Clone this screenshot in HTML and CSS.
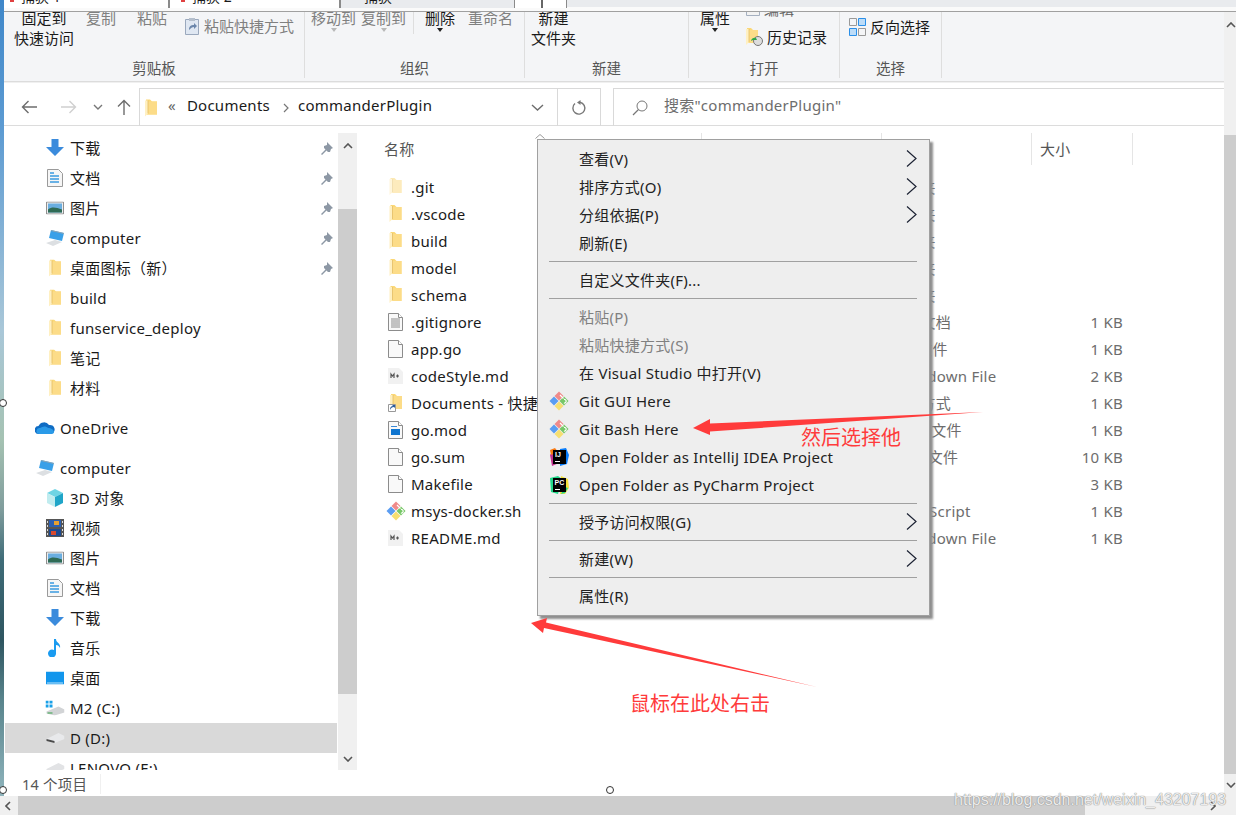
FILE: index.html
```html
<!DOCTYPE html>
<html>
<head>
    <meta charset="UTF-8">
    <title>commanderPlugin</title>
    <link rel="stylesheet" href="styles.css">
</head>
<body>
<svg class="defs" width="0" height="0">
    <symbol id="i-folder" viewBox="0 0 12 17">
        <path d="M1 0h4l2 2h5v13H1z" fill="#fbd877"/>
        <path d="M2 2h10v13H2z" fill="#fcdc88"/>
        <path d="M0 1h3v13L0 17z" fill="#fff0c2"/>
        <path d="M3 1v13" stroke="#e3bd62" stroke-width=".8"/>
    </symbol>
    <symbol id="i-down" viewBox="0 0 18 18">
        <path d="M5.500 0h7v8H18l-9 9-9-9h5.500z" fill="#3b8bdc"/>
    </symbol>
    <symbol id="i-doc" viewBox="0 0 16 18">
        <path d="M.5.500h11l4 4v13H.5z" fill="#f6f6f6" stroke="#9a9a9a"/>
        <path d="M3 4h4M3 7h9M3 10h9M3 13h9" stroke="#3a9ae0" stroke-width="1.500"/>
    </symbol>
    <symbol id="i-pic" viewBox="0 0 18 13">
        <path d="M.5.500h17v12H.5z" fill="#eee" stroke="#8f8f8f"/>
        <path d="M2 2h14v9H2z" fill="#6aaee0"/>
        <path d="M2 8c4-3 8-2 14 0v3H2z" fill="#2f6b55"/>
    </symbol>
    <symbol id="i-pc" viewBox="0 0 20 18">
        <path d="M6 1l13 3-2 8-13-3z" fill="#3aa0e8"/>
        <path d="M6 1l13 3v1L6 2z" fill="#8fa5b5"/>
        <path d="M1 14l9-3 7 2-9 4z" fill="#dcdfe2"/>
    </symbol>
    <symbol id="i-git" viewBox="0 0 20 20">
        <path d="M10 .5L14.500 5 10 9.500 5.500 5z" fill="#f08a8a"/>
        <path d="M5 5.500L9.500 10 5 14.500.5 10z" fill="#5a9df2"/>
        <path d="M15 5.500l4.500 4.500-4.500 4.500-4.500-4.500z" fill="#76c766"/>
        <path d="M10 10.500l4.500 4.500-4.500 4.500L5.500 15z" fill="#f6df72"/>
        <path d="M11 4l3.500 3.500M15 8.500a1.800 1.800 0 1 1-.1 3.500" fill="none" stroke="#fff" stroke-width="1.200"/>
    </symbol>
    <symbol id="i-file" viewBox="0 0 15 18">
        <path d="M.5.500h10l4 4v13H.5z" fill="#f9f9f9" stroke="#8c8c8c"/>
        <path d="M10.500.5v4h4" fill="#fff" stroke="#8c8c8c"/>
    </symbol>
    <symbol id="i-md" viewBox="0 0 15 18">
        <path d="M0 1h11l4 4v12H0z" fill="#f1f1f1"/>
        <path d="M3 11V7l1.500 2L6 7v4M8 9h3M9.500 7.500v3" fill="none" stroke="#555" stroke-width="1.200"/>
    </symbol>
    <symbol id="i-pin" viewBox="0 0 13 13">
        <path d="M7 0l6 6-2 1-1 3-2 0-1.500-1.500L2 13l-1-1 4.500-4.500L4 6V4l3-1z" fill="#8d98a5"/>
    </symbol>
    <symbol id="i-chev" viewBox="0 0 11 17">
        <path d="M1 .5l9 8-9 8" fill="none" stroke="#1c2233" stroke-width="1.200"/>
    </symbol>
</svg>

<div class="desk"></div>
<div class="win">
    <div class="tabs">
        <div class="tab t1"><span class="tab-txt">捕获 1</span><i>×</i></div>
        <div class="tab t2"><span class="tab-txt">捕获 2</span><i>×</i></div>
        <div class="tab on"><span class="tab-txt">捕获</span><i>×</i></div>
        <div class="tab small"><b></b></div>
    </div>

    <div class="mid">
        <div class="content">
            <div class="ribbon">
                <div class="grp g1">
                    <div class="grp-body">
                        <div class="tool w60"><span>固定到</span><span>快速访问</span></div>
                        <div class="tool off ml12"><span>复制</span></div>
                        <div class="tool off ml21"><span>粘贴</span></div>
                        <div class="tool-row off ml18">
                            <svg width="14" height="18" viewBox="0 0 14 18"><path d="M.5 2.500h13v15H.5z" fill="#dfe7f2" stroke="#9aa8bd"/><path d="M4 1h6v3H4z" fill="#b5bfcc"/><path d="M4 13c0-4 2-5 5-5V6l3 3-3 3v-2c-2 0-3 1-5 3z" fill="#6b86ab"/></svg>
                            <span>粘贴快捷方式</span>
                        </div>
                    </div>
                    <div class="grp-label">剪贴板</div>
                </div>
                <div class="grp g2">
                    <div class="grp-body">
                        <div class="tool off drop"><span>移动到</span></div>
                        <div class="tool off drop ml5"><span>复制到</span></div>
                        <div class="rule"></div>
                        <div class="tool drop dark"><span>删除</span></div>
                        <div class="tool off ml13"><span>重命名</span></div>
                    </div>
                    <div class="grp-label">组织</div>
                </div>
                <div class="grp g3">
                    <div class="grp-body">
                        <div class="tool"><span>新建</span><span>文件夹</span></div>
                    </div>
                    <div class="grp-label">新建</div>
                </div>
                <div class="grp g4">
                    <div class="grp-body">
                        <div class="tool drop dark"><span>属性</span></div>
                        <div class="open-col">
                            <div class="tool-row clip"><svg width="14" height="14" viewBox="0 0 14 14"><path d="M.5.500h13v13H.5z" fill="#f2f2f2" stroke="#a5b0c0"/></svg><span>编辑</span></div>
                            <div class="tool-row">
                                <svg width="17" height="18" viewBox="0 0 17 18"><use href="#i-folder" width="12" height="17"/><circle cx="12" cy="13" r="4.500" fill="#ddd" stroke="#777"/><path d="M5 13a3.500 3.500 0 0 1 5-3l1 2H7z" fill="#2fa84a"/></svg>
                                <span>历史记录</span>
                            </div>
                        </div>
                    </div>
                    <div class="grp-label">打开</div>
                </div>
                <div class="grp g5">
                    <div class="grp-body">
                        <div class="tool-row sel-tool">
                            <svg width="17" height="18" viewBox="0 0 17 18"><path d="M.5.500h7v7h-7zM9.500 10.500h7v7h-7z" fill="#f4f5f7" stroke="#999"/><path d="M9.500.5h7v7h-7zM.5 10.500h7v7h-7z" fill="#bcdcf8" stroke="#2a8fe8"/></svg>
                            <span>反向选择</span>
                        </div>
                    </div>
                    <div class="grp-label">选择</div>
                </div>
            </div>

            <div class="addr">
                <div class="nav-btns">
                    <svg width="16" height="14" viewBox="0 0 16 14"><path d="M16 7H1.500M7.500 1l-6 6 6 6" fill="none" stroke="#6d6d6d" stroke-width="1.400"/></svg>
                    <svg class="ml24" width="16" height="14" viewBox="0 0 16 14"><path d="M0 7h14.500M8.500 1l6 6-6 6" fill="none" stroke="#d0d0d0" stroke-width="1.400"/></svg>
                    <svg class="ml16" width="10" height="6" viewBox="0 0 10 6"><path d="M1 1l4 4 4-4" fill="none" stroke="#777" stroke-width="1.400"/></svg>
                    <svg class="ml14" width="14" height="16" viewBox="0 0 14 16"><path d="M7 16V1.500M1 7.500l6-6 6 6" fill="none" stroke="#6d6d6d" stroke-width="1.400"/></svg>
                </div>
                <div class="path">
                    <svg class="path-ico" width="12" height="18"><use href="#i-folder"/></svg>
                    <span class="crumb-sep">«</span>
                    <span class="crumb">Documents</span>
                    <svg class="crumb-arrow" width="6" height="10" viewBox="0 0 6 10"><path d="M1 1l4 4-4 4" fill="none" stroke="#777" stroke-width="1.200"/></svg>
                    <span class="crumb">commanderPlugin</span>
                    <svg class="path-drop" width="13" height="7" viewBox="0 0 13 7"><path d="M1 1l5.500 5L12 1" fill="none" stroke="#6d6d6d" stroke-width="1.400"/></svg>
                    <div class="path-refresh">
                        <svg width="16" height="16" viewBox="0 0 16 16"><path d="M9 2.200A6 6 0 1 1 4 3.500" fill="none" stroke="#777" stroke-width="1.400"/><path d="M9.500 0v5L6 2.500z" fill="#777"/></svg>
                    </div>
                </div>
                <div class="search">
                    <svg width="16" height="16" viewBox="0 0 16 16"><circle cx="10" cy="6" r="5" fill="none" stroke="#777"/><path d="M6.500 9.500L1 15" stroke="#777" stroke-width="1.200"/></svg>
                    <span>搜索"commanderPlugin"</span>
                </div>
            </div>

            <div class="main">
                <div class="side">
                    <div class="side-list">
                        <div class="n"><svg class="ni" width="18" height="18"><use href="#i-down"/></svg><span>下载</span><svg class="pin" width="13" height="13"><use href="#i-pin"/></svg></div>
                        <div class="n"><svg class="ni" width="16" height="18"><use href="#i-doc"/></svg><span>文档</span><svg class="pin" width="13" height="13"><use href="#i-pin"/></svg></div>
                        <div class="n"><svg class="ni" width="18" height="13"><use href="#i-pic"/></svg><span>图片</span><svg class="pin" width="13" height="13"><use href="#i-pin"/></svg></div>
                        <div class="n"><svg class="ni" width="20" height="18"><use href="#i-pc"/></svg><span>computer</span><svg class="pin" width="13" height="13"><use href="#i-pin"/></svg></div>
                        <div class="n"><svg class="ni" width="12" height="17"><use href="#i-folder"/></svg><span>桌面图标（新）</span><svg class="pin" width="13" height="13"><use href="#i-pin"/></svg></div>
                        <div class="n"><svg class="ni" width="12" height="17"><use href="#i-folder"/></svg><span>build</span></div>
                        <div class="n"><svg class="ni" width="12" height="17"><use href="#i-folder"/></svg><span>funservice_deploy</span></div>
                        <div class="n"><svg class="ni" width="12" height="17"><use href="#i-folder"/></svg><span>笔记</span></div>
                        <div class="n"><svg class="ni" width="12" height="17"><use href="#i-folder"/></svg><span>材料</span></div>

                        <div class="n top lv0"><svg class="ni" width="20" height="14" viewBox="0 0 20 14"><path d="M4 13a4 4 0 0 1-.5-8A6 6 0 0 1 14 4a4.500 4.500 0 0 1 2 9z" fill="#0f6cc4"/><path d="M4 13a3 3 0 0 1 1-6c3-2 6-2 8 0 3 0 6 2 6 4 0 1-1 2-3 2z" fill="#2a9ae8"/></svg><span>OneDrive</span></div>

                        <div class="n top lv0"><svg class="ni" width="20" height="18"><use href="#i-pc"/></svg><span>computer</span></div>
                        <div class="n"><svg class="ni" width="18" height="18" viewBox="0 0 18 18"><path d="M9 0l8 4-8 4-8-4z" fill="#6ed4e4"/><path d="M1 4l8 4v10l-8-4z" fill="#c0ecef"/><path d="M17 4L9 8v10l8-4z" fill="#1fa5c8"/></svg><span>3D 对象</span></div>
                        <div class="n"><svg class="ni" width="18" height="18" viewBox="0 0 18 18"><path d="M0 0h18v18H0z" fill="#555"/><path d="M3 1h12v7H3z" fill="#2b5fb0"/><path d="M3 10h12v7H3z" fill="#1d4a90"/><path d="M8 2h5v4H8z" fill="#e8a030"/><path d="M5 12h5v4H5z" fill="#d84a30"/><path d="M1 2h1v2H1zM1 6h1v2H1zM1 10h1v2H1zM1 14h1v2H1zM16 2h1v2h-1zM16 6h1v2h-1zM16 10h1v2h-1zM16 14h1v2h-1z" fill="#ddd"/></svg><span>视频</span></div>
                        <div class="n"><svg class="ni" width="18" height="13"><use href="#i-pic"/></svg><span>图片</span></div>
                        <div class="n"><svg class="ni" width="16" height="18"><use href="#i-doc"/></svg><span>文档</span></div>
                        <div class="n"><svg class="ni" width="18" height="18"><use href="#i-down"/></svg><span>下载</span></div>
                        <div class="n"><svg class="ni" width="14" height="18" viewBox="0 0 14 18"><path d="M6 0h2c0 4 5 4 4 9-1-2-2-3-4-3v8a4 4 0 1 1-2-3z" fill="#1a9bf0"/></svg><span>音乐</span></div>
                        <div class="n"><svg class="ni" width="18" height="13" viewBox="0 0 18 13"><path d="M0 0h18v13H0z" fill="#1296ec"/><path d="M1 11h16v1H1z" fill="#bfe6fb"/></svg><span>桌面</span></div>
                        <div class="n"><svg class="ni" width="19" height="15" viewBox="0 0 19 15"><path d="M0 0h3v3H0zM4 0h3v3H4zM0 4h3v3H0zM4 4h3v3H4z" fill="#18a0e8"/><path d="M1 11l12-5 6 3v3l-10 3-8-2z" fill="#d2d4d6"/><path d="M2 12h5v1H2z" fill="#37a24a"/></svg><span>M2 (C:)</span></div>
                        <div class="n cur"><svg class="ni" width="19" height="10" viewBox="0 0 19 10"><path d="M1 6l12-6 6 3v3L9 10 1 8z" fill="#e8e9eb"/><path d="M1 6l8 2v2L1 8z" fill="#4a4a4a"/></svg><span>D (D:)</span></div>
                        <div class="n"><svg class="ni" width="19" height="10" viewBox="0 0 19 10"><path d="M1 6l12-6 6 3v3L9 10 1 8z" fill="#e2e3e5"/></svg><span>LENOVO (E:)</span></div>
                    </div>
                    <div class="side-scroll">
                        <div class="sc-end"><svg width="10" height="6" viewBox="0 0 10 6"><path d="M1 5l4-4 4 4" fill="none" stroke="#555" stroke-width="1.600"/></svg></div>
                        <div class="sc-thumb"></div>
                        <div class="sc-end end-b"><svg width="10" height="6" viewBox="0 0 10 6"><path d="M1 1l4 4 4-4" fill="none" stroke="#555" stroke-width="1.600"/></svg></div>
                    </div>
                </div>

                <div class="files">
                    <div class="heads">
                        <div class="h h-name">名称<svg class="sort-up" width="10" height="5" viewBox="0 0 10 5"><path d="M.5 4.500L5 .5l4.500 4" fill="none" stroke="#999"/></svg></div>
                        <div class="h h-date"></div>
                        <div class="h h-type"></div>
                        <div class="h h-size">大小</div>
                    </div>
                    <div class="row"><svg class="fi" width="15" height="17" opacity=".55"><use href="#i-folder"/></svg><span class="c-name">.git</span><span class="c-type">文件夹</span><span class="c-size"></span></div>
                    <div class="row"><svg class="fi" width="15" height="17"><use href="#i-folder"/></svg><span class="c-name">.vscode</span><span class="c-type">文件夹</span><span class="c-size"></span></div>
                    <div class="row"><svg class="fi" width="15" height="17"><use href="#i-folder"/></svg><span class="c-name">build</span><span class="c-type">文件夹</span><span class="c-size"></span></div>
                    <div class="row"><svg class="fi" width="15" height="17"><use href="#i-folder"/></svg><span class="c-name">model</span><span class="c-type">文件夹</span><span class="c-size"></span></div>
                    <div class="row"><svg class="fi" width="15" height="17"><use href="#i-folder"/></svg><span class="c-name">schema</span><span class="c-type">文件夹</span><span class="c-size"></span></div>
                    <div class="row"><svg class="fi" width="15" height="18" viewBox="0 0 15 18"><use href="#i-file"/><path d="M3 6h9M3 8h9M3 10h9M3 12h9M3 14h9" stroke="#8c8c8c"/></svg><span class="c-name">.gitignore</span><span class="c-type">文本文档</span><span class="c-size">1 KB</span></div>
                    <div class="row"><svg class="fi" width="15" height="18"><use href="#i-file"/></svg><span class="c-name">app.go</span><span class="c-type">GO 文件</span><span class="c-size">1 KB</span></div>
                    <div class="row"><svg class="fi" width="15" height="18"><use href="#i-md"/></svg><span class="c-name">codeStyle.md</span><span class="c-type">Markdown File</span><span class="c-size">2 KB</span></div>
                    <div class="row"><svg class="fi" width="15" height="18" viewBox="0 0 15 18"><use href="#i-folder" x="2" width="12" height="17"/><path d="M.5 10.500h7v7h-7z" fill="#fff" stroke="#999"/><path d="M2 16c0-3 1-4 3-4l-1-1h3v3l-1-1c-2 0-3 1-4 3z" fill="#2a5d9c"/></svg><span class="c-name">Documents - 快捷方式</span><span class="c-type">快捷方式</span><span class="c-size">1 KB</span></div>
                    <div class="row"><svg class="fi" width="15" height="18" viewBox="0 0 15 18"><use href="#i-file"/><path d="M3 8h9v6H3z" fill="#0f75d0"/><path d="M3 5h6v1H3z" fill="#3a8ad8"/></svg><span class="c-name">go.mod</span><span class="c-type">MOD 文件</span><span class="c-size">1 KB</span></div>
                    <div class="row"><svg class="fi" width="15" height="18"><use href="#i-file"/></svg><span class="c-name">go.sum</span><span class="c-type">SUM 文件</span><span class="c-size">10 KB</span></div>
                    <div class="row"><svg class="fi" width="15" height="18"><use href="#i-file"/></svg><span class="c-name">Makefile</span><span class="c-type">文件</span><span class="c-size">3 KB</span></div>
                    <div class="row git-row"><svg class="fi" width="20" height="20"><use href="#i-git"/></svg><span class="c-name">msys-docker.sh</span><span class="c-type">Shell Script</span><span class="c-size">1 KB</span></div>
                    <div class="row"><svg class="fi" width="15" height="18"><use href="#i-md"/></svg><span class="c-name">README.md</span><span class="c-type">Markdown File</span><span class="c-size">1 KB</span></div>
                </div>
            </div>

            <div class="status"><span>14 个项目</span></div>
        </div>

        <div class="vbar">
            <div class="vb-top"><svg width="10" height="6" viewBox="0 0 10 6"><path d="M1 5l4-4 4 4" fill="none" stroke="#555" stroke-width="1.600"/></svg></div>
            <div class="sc-thumb"></div>
            <div class="vb-bot"><svg width="10" height="6" viewBox="0 0 10 6"><path d="M1 1l4 4 4-4" fill="none" stroke="#555" stroke-width="1.600"/></svg></div>
        </div>
    </div>

    <div class="hbar">
        <div class="hb-left"><svg width="6" height="10" viewBox="0 0 6 10"><path d="M5 1L1 5l4 4" fill="none" stroke="#555" stroke-width="1.600"/></svg></div>
        <div class="hb-thumb"></div>
        <div class="hb-right"><svg width="6" height="10" viewBox="0 0 6 10"><path d="M1 1l4 4-4 4" fill="none" stroke="#555" stroke-width="1.600"/></svg></div>
    </div>
</div>

<!-- 右键菜单 -->
<div class="menu">
    <div class="mi has">查看(V)<svg class="arr" width="11" height="17"><use href="#i-chev"/></svg></div>
    <div class="mi has">排序方式(O)<svg class="arr" width="11" height="17"><use href="#i-chev"/></svg></div>
    <div class="mi has">分组依据(P)<svg class="arr" width="11" height="17"><use href="#i-chev"/></svg></div>
    <div class="mi">刷新(E)</div>
    <div class="ms"></div>
    <div class="mi">自定义文件夹(F)...</div>
    <div class="ms"></div>
    <div class="mi dis">粘贴(P)</div>
    <div class="mi dis">粘贴快捷方式(S)</div>
    <div class="mi">在 Visual Studio 中打开(V)</div>
    <div class="mi"><svg class="mico" width="20" height="20"><use href="#i-git"/></svg>Git GUI Here</div>
    <div class="mi"><svg class="mico" width="20" height="20"><use href="#i-git"/></svg>Git Bash Here</div>
    <div class="mi"><svg class="mico" width="20" height="20" viewBox="0 0 20 20"><path d="M1 8l4-6 5 2v12l-7 3z" fill="#c2338f"/><path d="M1 3l5-2 3 4-7 3z" fill="#f97a12"/><path d="M11 2l6-1 3 7-2 9-7 2z" fill="#087cfa"/><path d="M4 3h13v14H4z" fill="#000"/><text class="ico-txt" x="6" y="10">IJ</text><path d="M6 14h5v1H6z" fill="#fff"/></svg><span>Open Folder as IntelliJ IDEA Project</span></div>
    <div class="mi"><svg class="mico" width="20" height="20" viewBox="0 0 20 20"><path d="M1 3l8-2 4 3-4 15-7-2z" fill="#21d789"/><path d="M12 1l7 3 1 9-4 6h-5z" fill="#f5e13a"/><path d="M16 12l3 1-3 5-4 1z" fill="#21d789"/><path d="M4 3h13v14H4z" fill="#000"/><text class="ico-txt" x="5.500" y="10">PC</text><path d="M6 14h5v1H6z" fill="#fff"/></svg><span>Open Folder as PyCharm Project</span></div>
    <div class="ms"></div>
    <div class="mi has">授予访问权限(G)<svg class="arr" width="11" height="17"><use href="#i-chev"/></svg></div>
    <div class="ms"></div>
    <div class="mi has">新建(W)<svg class="arr" width="11" height="17"><use href="#i-chev"/></svg></div>
    <div class="ms"></div>
    <div class="mi">属性(R)</div>
</div>

<!-- 截图上的标注 -->
<svg class="marks" width="1236" height="819" viewBox="0 0 1236 819">
    <path d="M693 428L710 419L710 423.500L983 412L710 431.500L710 435z" fill="#ff3b3b"/>
    <path d="M531 623L547 618L546 622.500L817 687L544 628L543 633z" fill="#ff3b3b"/>
</svg>
<div class="note note-a">然后选择他</div>
<div class="note note-b">鼠标在此处右击</div>
<span class="handle h1"></span>
<span class="handle h2"></span>
<span class="handle h3"></span>
<div class="mark">https://blog.csdn.net/weixin_43207193</div>
</body>
</html>
```
FILE: styles.css
```css
* {
    margin: 0;
    padding: 0;
    box-sizing: border-box;
}

html, body {
    width: 1236px;
    height: 819px;
    overflow: hidden;
    background: #fff;
    font-family: "Noto Sans", "Noto Sans CJK SC", sans-serif;
    font-size: 15px;
    line-height: 20px;
    letter-spacing: .25px;
    color: #1a1a1a;
}

body {
    display: flex;
    position: relative;
}

svg {
    display: block;
    flex: none;
}

.defs {
    position: absolute;
}

.desk {
    width: 4px;
    height: 796px;
    flex: none;
    background: linear-gradient(#3f87c9 0, #5d9bd2 130px, #a9c7d8 330px, #a5c2b2 440px, #7f9c9c 510px, #3f6c78 560px, #2e5560 640px, #59848c 700px, #8fb4bc 796px);
}

.win {
    width: 1232px;
    height: 819px;
    flex: none;
}

/* 标签栏 */
.tabs {
    height: 12px;
    display: flex;
    overflow: hidden;
    background: #e9ebee;
    border-bottom: 1px solid #a0a0a0;
    box-shadow: inset 0 -4px 0 #fafafa;
}

.tab {
    height: 8px;
    display: flex;
    background: #fff;
    border-right: 2px solid #8a8a8a;
    font-size: 14px;
    line-height: 14px;
    letter-spacing: 0;
    overflow: hidden;
    flex: none;
}

.t1 { width: 166px; padding: 0 10px 0 17px; }
.t2 { width: 171px; padding: 0 11px 0 22px; }

.t1::before, .t2::before {
    content: "";
    width: 4px;
    height: 2px;
    margin: 0 7px 0 -11px;
    background: #e04040;
}

.tab.on {
    width: 174px;
    background: #e9ebee;
    border-right: 1px solid #8a8a8a;
    padding: 0 4px 0 23px;
}

.tab.small {
    width: 52px;
    border-right: 1px solid #8a8a8a;
}

.tab.small b {
    width: 2px;
    height: 8px;
    margin-left: 26px;
    background: #666;
}

.tab-txt, .tab i {
    margin-top: -10px;
    font-style: normal;
}

.tab-txt {
    margin-right: auto;
}

.mid {
    height: 784px;
    display: flex;
}

.content {
    width: 1220px;
    flex: none;
}

/* 功能区 */
.ribbon {
    height: 70px;
    display: flex;
    background: #f4f5f7;
    border-bottom: 1px solid #dcdcdc;
    overflow: hidden;
    letter-spacing: 0;
}

.grp {
    height: 66px;
    display: flex;
    flex-direction: column;
    flex: none;
    border-right: 1px solid #dedede;
}

.g1 { width: 301px; padding-left: 10px; }
.g2 { width: 220px; padding-left: 6px; }
.g3 { width: 164px; padding-left: 6px; }
.g4 { width: 151px; padding-left: 11px; }
.g5 { width: 102px; padding-left: 9px; }

.grp-body {
    height: 48px;
    margin-top: -4px;
    display: flex;
    flex: none;
}

.grp-label {
    height: 24px;
    line-height: 24px;
    text-align: center;
    color: #555;
    font-size: 14.500px;
}

.g1 .grp-label { margin-left: -10px; }
.g2 .grp-label { margin-left: -6px; }
.g3 .grp-label { margin-left: -6px; }
.g4 .grp-label { margin-left: -11px; }
.g5 .grp-label { margin-left: -9px; }

.tool {
    display: flex;
    flex-direction: column;
    align-items: center;
    white-space: nowrap;
    flex: none;
}

.tool.off, .tool-row.off {
    color: #808080;
}

.tool.drop::after {
    content: "";
    width: 0;
    height: 0;
    border: 3.500px solid transparent;
    border-top: 4px solid #b8b8b8;
    border-bottom: 0;
}

.tool.drop.dark::after {
    border-top-color: #222;
}

.w60 { width: 60px; }
.ml5 { margin-left: 5px; }
.ml12 { margin-left: 12px; }
.ml13 { margin-left: 13px; }
.ml14 { margin-left: 14px; }
.ml16 { margin-left: 16px; }
.ml18 { margin-left: 18px; }
.ml21 { margin-left: 21px; }
.ml24 { margin-left: 24px; }

.tool-row {
    height: 20px;
    display: flex;
    align-items: center;
    gap: 5px;
    margin-top: 8px;
    flex: none;
}

.rule {
    width: 1px;
    height: 26px;
    margin: 0 11px 0 7px;
    background: #dedede;
}

.open-col {
    margin-left: 16px;
    display: flex;
    flex-direction: column;
}

.open-col .tool-row {
    margin-top: 0;
    gap: 4px;
}

.open-col .clip {
    height: 19px;
    margin-top: -9px;
    margin-bottom: 9px;
    color: #666;
}

.sel-tool {
    gap: 4px;
    margin-top: 9px;
}

/* 地址栏 */
.addr {
    height: 44px;
    display: flex;
    border-bottom: 1px solid #dcdcdc;
    border-top: 1px solid #f0f0f0;
    padding-top: 5px;
}

.nav-btns {
    width: 135px;
    padding-left: 17px;
    display: flex;
    align-items: center;
    flex: none;
}

.path {
    width: 462px;
    height: 38px;
    flex: none;
    display: flex;
    align-items: center;
    border: 1px solid #d9d9d9;
    border-bottom: 0;
}

.path-ico {
    margin-left: 5px;
}

.crumb-sep {
    margin: -5px 11px 0;
    color: #666;
}

.crumb {
    margin-top: -5px;
}

.crumb-arrow {
    margin: 0 9px 0 13px;
}

.path-drop {
    margin-left: auto;
    margin-right: 13px;
}

.path-refresh {
    width: 43px;
    height: 37px;
    flex: none;
    border-left: 1px solid #d9d9d9;
    display: flex;
    align-items: center;
    justify-content: center;
}

.search {
    width: 611px;
    height: 38px;
    margin-left: 12px;
    flex: none;
    padding-left: 18px;
    display: flex;
    align-items: center;
    gap: 16px;
    border: 1px solid #d9d9d9;
    border-bottom: 0;
    border-right: 0;
    color: #6d6d6d;
}

.search span {
    margin-top: -5px;
}

/* 主体 */
.main {
    height: 644px;
    display: flex;
}

.side {
    width: 353px;
    flex: none;
    display: flex;
    padding-top: 7px;
}

.side-list {
    width: 334px;
    height: 637px;
    flex: none;
    overflow: hidden;
}

.n {
    height: 30px;
    display: flex;
    align-items: center;
    position: relative;
    padding-left: 65px;
    margin: 0 1px;
}

.n .ni {
    position: absolute;
    left: 50px;
    top: 50%;
    transform: translate(-50%, -50%);
}

.n.top {
    margin-top: 10px;
}

.n.lv0 {
    padding-left: 55px;
}

.n.lv0 .ni {
    left: 40px;
}

.n.cur {
    background: #d9d9d9;
}

.n .pin {
    margin-left: auto;
    margin-right: 4px;
}

.side-scroll {
    width: 19px;
    height: 637px;
    flex: none;
    display: flex;
    flex-direction: column;
    background: #f0f0f0;
}

.sc-end {
    height: 76px;
    flex: none;
    display: flex;
    justify-content: center;
    padding-top: 10px;
}

.sc-end.end-b {
    align-items: flex-end;
    padding: 0 0 8px;
}

.sc-thumb {
    flex: 1;
    background: #cdcdcd;
}

.files {
    flex: 1;
    padding-top: 7px;
    overflow: hidden;
}

.heads {
    height: 32px;
    display: flex;
    margin-bottom: 8px;
    color: #555;
}

.h {
    height: 32px;
    line-height: 32px;
    border-right: 1px solid #e5e5e5;
    flex: none;
}

.h-name { width: 345px; padding-left: 27px; position: relative; }
.h-date { width: 180px; }
.h-type { width: 150px; }
.h-size { width: 101px; padding-left: 8px; }

.sort-up {
    position: absolute;
    left: 178px;
    top: 1px;
}

.row {
    height: 27px;
    display: flex;
    align-items: center;
    padding-left: 31px;
}

.fi {
    width: 15px;
    margin-right: 8px;
}

.git-row .fi {
    width: 20px;
    margin: 0 5px 0 -2px;
}

.c-name {
    width: 479px;
    flex: none;
    white-space: nowrap;
    overflow: hidden;
}

.c-type {
    width: 150px;
    flex: none;
    color: #6d6d6d;
    white-space: nowrap;
}

.c-size {
    width: 83px;
    flex: none;
    text-align: right;
    color: #6d6d6d;
}

.vbar {
    width: 12px;
    flex: none;
    display: flex;
    flex-direction: column;
    background: #f0f0f0;
}

.vb-top {
    height: 123px;
    flex: none;
    padding: 10px 0 0 2px;
}

.vb-bot {
    height: 22px;
    flex: none;
    padding: 8px 0 0 2px;
}

.status {
    height: 26px;
    padding-left: 18px;
    display: flex;
    align-items: center;
    color: #555;
    font-size: 14.500px;
}

.status span {
    margin-top: 2px;
    padding-right: 13px;
    border-right: 1px solid #f0f0f0;
}

.hbar {
    height: 19px;
    margin-left: -4px;
    width: 1236px;
    display: flex;
    background: #f0f0f0;
}

.hb-left {
    width: 18px;
    flex: none;
    padding: 5px 0 0 5px;
}

.hb-thumb {
    width: 1067px;
    flex: none;
    background: #cdcdcd;
}

.hb-right {
    flex: 1;
    display: flex;
    justify-content: flex-end;
    padding: 5px 20px 0 0;
}

/* 右键菜单 */
.menu {
    position: absolute;
    left: 537px;
    top: 139px;
    width: 393px;
    height: 477px;
    padding: 5px 0;
    background: #eee;
    border: 1px solid #a0a0a0;
    box-shadow: 3px 3px 2px #8f8f8f;
}

.mi {
    height: 28px;
    display: flex;
    align-items: center;
    position: relative;
    padding: 0 0 1px 41px;
    white-space: nowrap;
    color: #222;
}

.mi.dis {
    color: #808080;
}

.mi.has .arr {
    position: absolute;
    right: 12px;
    top: 5px;
}

.mico {
    position: absolute;
    left: 11px;
    top: 4px;
}

.ico-txt {
    font-family: "Liberation Sans", sans-serif;
    font-size: 7px;
    font-weight: bold;
    letter-spacing: 0;
    fill: #fff;
}

.ms {
    height: 1px;
    margin: 4px 12px 4px 11px;
    background: #a0a0a0;
}

/* 标注 */
.marks {
    position: absolute;
    left: 0;
    top: 0;
}

.note {
    position: absolute;
    font-size: 20px;
    line-height: 28px;
    letter-spacing: 0;
    color: #ff3b3b;
    white-space: nowrap;
    font-family: "Noto Sans CJK SC", sans-serif;
}

.note-a { left: 801px; top: 423px; }
.note-b { left: 630px; top: 689px; }

.handle {
    position: absolute;
    width: 8px;
    height: 8px;
    border: 1px solid #333;
    border-radius: 50%;
    background: #fff;
}

.h1 { left: -1px; top: 399px; }
.h2 { left: -1px; top: 786px; }
.h3 { left: 606px; top: 786px; }

.mark {
    position: absolute;
    left: 954px;
    top: 791px;
    font-family: "Liberation Sans", sans-serif;
    font-size: 16px;
    letter-spacing: 0;
    line-height: 18px;
    color: rgba(255, 255, 255, .85);
    text-shadow: 0 0 1px #888, 0 0 1px #888;
    white-space: nowrap;
}
```
